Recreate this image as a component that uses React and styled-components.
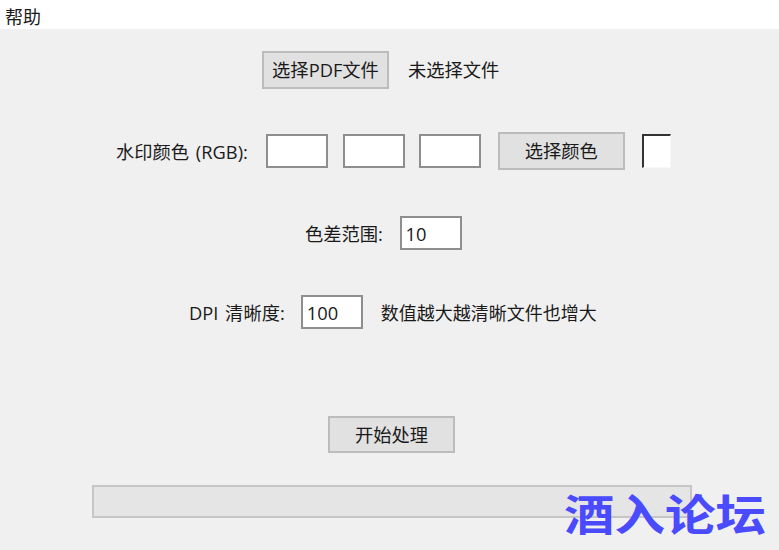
import React from "react";
import styled, { createGlobalStyle } from "styled-components";

const GlobalStyle = createGlobalStyle`
  html, body {
    margin: 0;
    padding: 0;
    background: #f0f0f0;
  }
  body {
    font-family: "Open Sans", "Noto Sans CJK SC", sans-serif;
    font-size: 18.3px;
    color: #1a1a1a;
  }
`;

const Window = styled.div`
  position: relative;
  width: 779px;
  height: 550px;
  overflow: hidden;
  background: #f0f0f0;
`;

const MenuBar = styled.div`
  height: 29px;
  background: #fff;
  display: flex;
  align-items: center;
  padding: 2px 0 0 5px;
  box-sizing: border-box;
  font-size: 18px;
`;

const Form = styled.div`
  display: flex;
  flex-direction: column;
  align-items: flex-start;
`;

const Row = styled.div`
  display: flex;
  align-items: center;
  height: ${(p) => p.$height}px;
  margin-top: ${(p) => p.$top}px;
  padding-left: ${(p) => p.$left}px;
`;

const Label = styled.span`
  white-space: nowrap;
  word-spacing: 2px;
  margin-right: ${(p) => p.$gap || 0}px;
  margin-bottom: ${(p) => p.$lift || 0}px;
  font-size: ${(p) => p.$size || 18.3}px;
`;

const Button = styled.button`
  width: ${(p) => p.$width}px;
  height: ${(p) => p.$height || 38}px;
  box-sizing: border-box;
  padding: 0 0 2px;
  margin-right: ${(p) => p.$gap || 0}px;
  background: #e1e1e1;
  border: 2px solid #bcbcbc;
  font: inherit;
  color: inherit;
`;

const Field = styled.input`
  width: 62px;
  height: 34px;
  box-sizing: border-box;
  padding: 0 4px;
  margin: 0 ${(p) => p.$gap || 0}px 0 0;
  background: #fff;
  border: 2px solid #8e8e8e;
  border-radius: 0;
  outline: none;
  font: inherit;
  color: inherit;
`;

const Swatch = styled.div`
  width: 29px;
  height: 34px;
  box-sizing: border-box;
  background: #fff;
  border-top: 2px solid #333;
  border-left: 2px solid #333;
  border-right: 1px solid #f7f7f7;
  border-bottom: 1px solid #f7f7f7;
`;

const Progress = styled.div`
  width: 600px;
  height: 33px;
  box-sizing: border-box;
  background: #e5e5e5;
  border: 2px solid #c6c6c6;
`;

const Watermark = styled.div`
  position: absolute;
  left: 564px;
  top: 488px;
  font-family: "Noto Sans CJK SC", sans-serif;
  font-size: 50.5px;
  font-weight: 700;
  line-height: 56px;
  white-space: nowrap;
  color: #4a4aff;
  transform: scaleY(0.86);
  transform-origin: top left;
`;

export default function App() {
  return (
    <Window>
      <GlobalStyle />
      <MenuBar>帮助</MenuBar>
      <Form>
        <Row $height={38} $top={22} $left={262}>
          <Button $width={127} $gap={19}>选择PDF文件</Button>
          <Label $lift={2}>未选择文件</Label>
        </Row>
        <Row $height={38} $top={43} $left={116}>
          <Label $gap={18}>水印颜色 (RGB):</Label>
          <Field $gap={15} />
          <Field $gap={14} />
          <Field $gap={17} />
          <Button $width={127} $gap={17}>选择颜色</Button>
          <Swatch />
        </Row>
        <Row $height={34} $top={46} $left={305}>
          <Label $gap={16.6}>色差范围:</Label>
          <Field defaultValue="10" />
        </Row>
        <Row $height={34} $top={45} $left={189}>
          <Label $gap={16}>DPI 清晰度:</Label>
          <Field $gap={18} defaultValue="100" />
          <Label $size={18}>数值越大越清晰文件也增大</Label>
        </Row>
        <Row $height={37} $top={87} $left={328}>
          <Button $width={127} $height={37}>开始处理</Button>
        </Row>
        <Row $height={33} $top={32} $left={92}>
          <Progress />
        </Row>
      </Form>
      <Watermark>酒入论坛</Watermark>
    </Window>
  );
}
